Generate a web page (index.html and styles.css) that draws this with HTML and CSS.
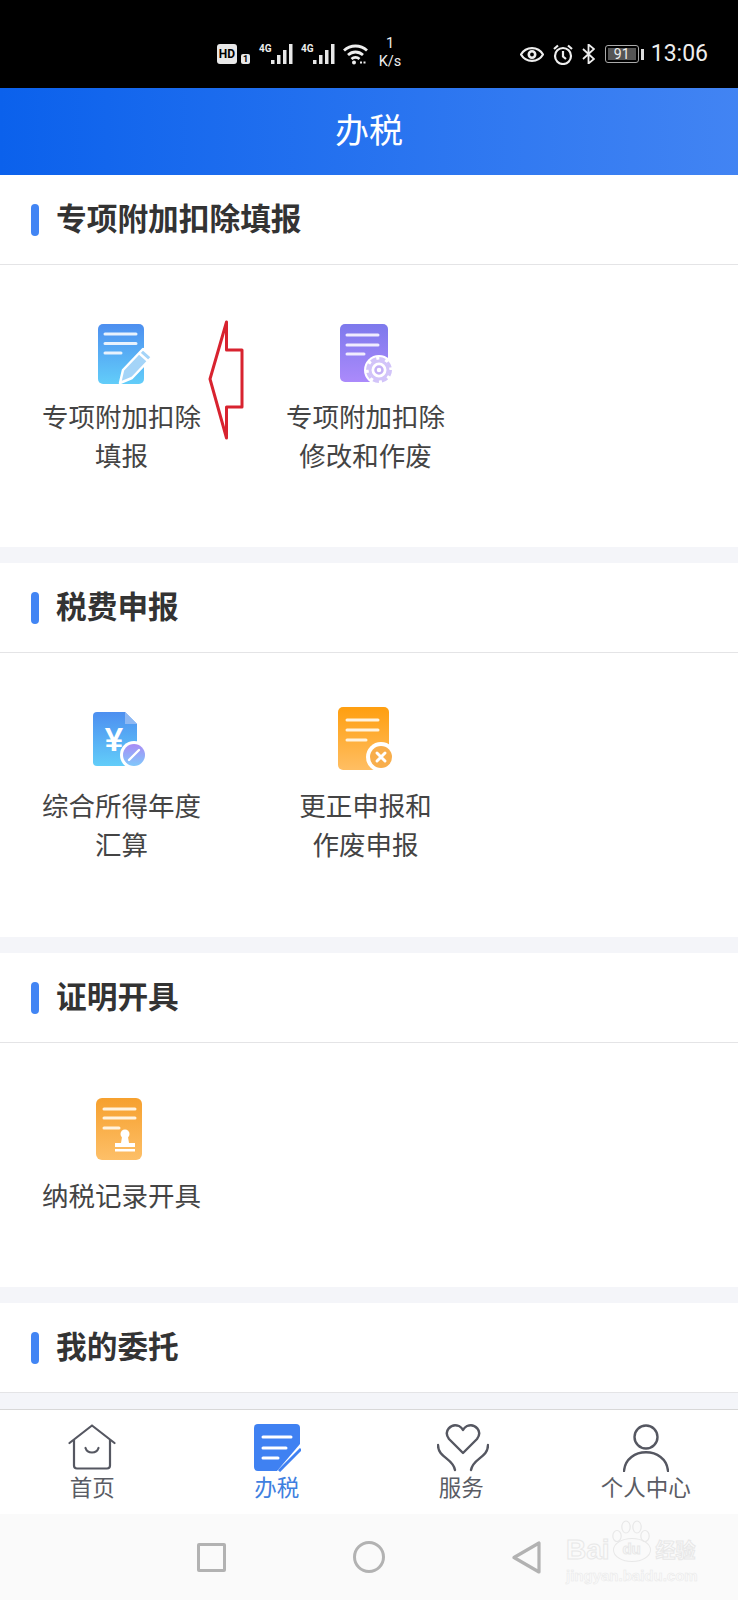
FILE: index.html
```html
<!DOCTYPE html>
<html>
  <head>
    <meta charset="UTF-8">
    <title>办税</title>
    <link rel="stylesheet" href="styles.css">
  </head>
  <body>
    <svg class="defs" width="0" height="0">
      <defs>
        <linearGradient id="g-blue" x1="0" y1="0" x2="0" y2="1"><stop offset="0" stop-color="#4d8ff0"/><stop offset="1" stop-color="#62cdf9"/></linearGradient>
        <linearGradient id="g-purple" x1="0" y1="0" x2="0" y2="1"><stop offset="0" stop-color="#7d79ec"/><stop offset="1" stop-color="#ab8afb"/></linearGradient>
        <linearGradient id="g-orange" x1="0" y1="0" x2="0" y2="1"><stop offset="0" stop-color="#ff9f0f"/><stop offset="1" stop-color="#ffbe63"/></linearGradient>
        <linearGradient id="g-amber" x1="0" y1="0" x2="0" y2="1"><stop offset="0" stop-color="#f6a02e"/><stop offset="1" stop-color="#fdbf68"/></linearGradient>
        <linearGradient id="g-badge" x1="0" y1="0" x2="0" y2="1"><stop offset="0" stop-color="#a98bf5"/><stop offset="1" stop-color="#80c8fb"/></linearGradient>
      </defs>
    </svg>

    <div class="page">
      <div class="status-bar">
        <div class="status-group">
          <span class="hd">HD</span>
          <span class="sim">1</span>
          <span class="net"><span class="net-label">4G</span>
            <svg width="22" height="20" viewBox="0 0 22 20" fill="#e8e8e8"><rect x="0" y="16" width="3.500" height="4"/><rect x="6" y="11" width="3.500" height="9"/><rect x="12" y="6" width="3.500" height="14"/><rect x="18" y="0" width="3.500" height="20"/></svg>
          </span>
          <span class="net"><span class="net-label">4G</span>
            <svg width="22" height="20" viewBox="0 0 22 20" fill="#e8e8e8"><rect x="0" y="16" width="3.500" height="4"/><rect x="6" y="11" width="3.500" height="9"/><rect x="12" y="6" width="3.500" height="14"/><rect x="18" y="0" width="3.500" height="20"/></svg>
          </span>
          <svg class="wifi" width="25" height="21" viewBox="0 0 25 21" fill="none" stroke="#eee" stroke-width="2.800"><path d="M1 6.500C7.500 .5 17.500 .5 24 6.500"/><path d="M5 11C9.500 7 15.500 7 20 11"/><path d="M8.500 15C10.800 13 14.200 13 16.500 15"/><circle cx="11" cy="18.500" r="2" fill="#eee" stroke="none"/><path d="M17 18.500h7" stroke-width="2" stroke-dasharray="2 1.500"/></svg>
          <span class="speed"><span>1</span><span>K/s</span></span>
        </div>
        <div class="status-group">
          <svg class="eye" width="24" height="15" viewBox="0 0 24 15" fill="none" stroke="#eee" stroke-width="2.200"><path d="M1 7.500C6 -1 18 -1 23 7.500C18 16 6 16 1 7.500Z"/><circle cx="12" cy="7.500" r="3.200" stroke-width="2.600"/></svg>
          <svg class="alarm" width="22" height="21" viewBox="0 0 22 21" fill="none" stroke="#eee" stroke-width="2.200"><circle cx="11" cy="12" r="8"/><path d="M11 7v5.500l3 2.500M2 5l4-3.500M20 5l-4-3.500"/></svg>
          <svg class="bt" width="13" height="20" viewBox="0 0 13 20" fill="none" stroke="#eee" stroke-width="1.800"><path d="M1 5l11 10-5.500 4.500V.5L12 5 1 15"/></svg>
          <span class="battery"><span class="battery-level">91</span></span>
          <span class="battery-cap"></span>
          <span class="clock">13:06</span>
        </div>
      </div>

      <div class="app-header">办税</div>

      <section class="section">
        <h2 class="section-title"><span class="title-mark"></span><span class="title-text">专项附加扣除填报</span></h2>
        <div class="items items-first">
          <div class="item">
            <div class="item-icon">
              <svg class="shift-pen" width="58" height="62" viewBox="0 0 58 62">
                <rect x="1" y="1" width="46" height="60" rx="5" fill="url(#g-blue)"/>
                <path d="M8 11h31M8 20.500h31M8 30h16" stroke="#e8f2fd" stroke-width="3" stroke-linecap="round"/>
                <path d="M23 60l3-13 20-21 9 8-20 21z" fill="#a4d4f8" stroke="#fff" stroke-width="2.500" stroke-linejoin="round"/>
                <path d="M42 30l9 8" stroke="#fff" stroke-width="2.500"/>
              </svg>
            </div>
            <div class="item-label">专项附加扣除<br>填报</div>
          </div>
          <div class="item">
            <div class="item-icon">
              <svg width="58" height="62" viewBox="0 0 58 62">
                <rect x="3" y="1" width="48" height="58" rx="5" fill="url(#g-purple)"/>
                <path d="M10 12h31M10 22h31M10 31h17" stroke="#f0ecfe" stroke-width="3" stroke-linecap="round"/>
                <circle cx="42" cy="47" r="15" fill="#fff"/>
                <circle cx="42" cy="47" r="11.500" fill="none" stroke="#d2c4f9" stroke-width="3" stroke-dasharray="6 3.030"/>
                <circle cx="42" cy="47" r="9" fill="none" stroke="#d2c4f9" stroke-width="3"/>
                <circle cx="42" cy="47" r="3.500" fill="none" stroke="#c4b0f6" stroke-width="2.500"/>
              </svg>
            </div>
            <div class="item-label">专项附加扣除<br>修改和作废</div>
          </div>
        </div>
      </section>

      <section class="section">
        <h2 class="section-title"><span class="title-mark"></span><span class="title-text">税费申报</span></h2>
        <div class="items items-tax">
          <div class="item">
            <div class="item-icon">
              <svg class="shift-left" width="58" height="60" viewBox="0 0 58 60">
                <path d="M6 3h28l12 12v38a4 4 0 0 1-4 4H6a4 4 0 0 1-4-4V7a4 4 0 0 1 4-4z" fill="url(#g-blue)"/>
                <path d="M34 3l12 12H34z" fill="#8eb8f3"/>
                <text class="yen" x="23" y="42" text-anchor="middle">¥</text>
                <circle cx="43" cy="46" r="14" fill="#fff"/>
                <circle cx="43" cy="46" r="11" fill="url(#g-badge)"/>
                <path d="M38 51l10-10" stroke="#fff" stroke-width="2.400" stroke-linecap="round"/>
              </svg>
            </div>
            <div class="item-label">综合所得年度<br>汇算</div>
          </div>
          <div class="item">
            <div class="item-icon">
              <svg width="60" height="66" viewBox="0 0 60 66">
                <rect x="2" y="1" width="51" height="63" rx="5" fill="url(#g-orange)"/>
                <path d="M11 14h31M11 24h31M11 34h19" stroke="#fff3df" stroke-width="3" stroke-linecap="round"/>
                <circle cx="45" cy="51" r="15" fill="#fff"/>
                <circle cx="45" cy="51" r="11" fill="#f8ae4c"/>
                <path d="M41 47l8 8M49 47l-8 8" stroke="#fff" stroke-width="3" stroke-linecap="round"/>
              </svg>
            </div>
            <div class="item-label">更正申报和<br>作废申报</div>
          </div>
        </div>
      </section>

      <section class="section">
        <h2 class="section-title"><span class="title-mark"></span><span class="title-text">证明开具</span></h2>
        <div class="items">
          <div class="item">
            <div class="item-icon">
              <svg class="shift-stamp" width="46" height="64" viewBox="0 0 46 64">
                <rect x="0" y="1" width="46" height="62" rx="6" fill="url(#g-amber)"/>
                <path d="M8 12h31M8 21h31M8 31h15" stroke="#fff3df" stroke-width="3" stroke-linecap="round"/>
                <circle cx="29" cy="37" r="4.500" fill="#fff"/>
                <path d="M26 40h6l1 6h6v4H19v-4h6z" fill="#fff"/>
                <rect x="19" y="52" width="20" height="2.500" fill="#fff"/>
              </svg>
            </div>
            <div class="item-label">纳税记录开具</div>
          </div>
        </div>
      </section>

      <section class="section">
        <h2 class="section-title"><span class="title-mark"></span><span class="title-text">我的委托</span></h2>
      </section>

      <nav class="tab-bar">
        <div class="tab">
          <svg width="48" height="48" viewBox="0 0 48 48" fill="none" stroke="#555761" stroke-width="2.200" stroke-linecap="round" stroke-linejoin="round"><path d="M1.500 19L24 1.500 46.500 19"/><path d="M6 16v25.500a3 3 0 0 0 3 3h30a3 3 0 0 0 3-3V16"/><path d="M17.500 24c2 6 11 6 13 0"/></svg>
          <span>首页</span>
        </div>
        <div class="tab tab-active">
          <svg width="48" height="48" viewBox="0 0 48 48"><path d="M5 0h38a4 4 0 0 1 4 4v16L24 47H5a4 4 0 0 1-4-4V4a4 4 0 0 1 4-4z" fill="#3f81f2"/><path d="M10 13h28M10 24h23M10 34h15" stroke="#fff" stroke-width="3" stroke-linecap="round"/><path d="M26 47L48 25" stroke="#3f81f2" stroke-width="3"/></svg>
          <span>办税</span>
        </div>
        <div class="tab">
          <svg class="shift-heart" width="52" height="48" viewBox="0 0 52 48" fill="none" stroke="#555761" stroke-width="2.400" stroke-linecap="round" stroke-linejoin="round"><path d="M26 29L12 15C6 7 14-1 22 2c2 1 3 2 4 4 1-2 2-3 4-4 8-3 16 5 10 13z"/><path d="M1 21c0 13 15 13 17 25"/><path d="M51 21c0 13-15 13-17 25"/></svg>
          <span>服务</span>
        </div>
        <div class="tab">
          <svg width="46" height="48" viewBox="0 0 46 48" fill="none" stroke="#555761" stroke-width="2.400" stroke-linecap="round"><circle cx="23" cy="13" r="11.500"/><path d="M1 47C3 22 43 22 45 47"/></svg>
          <span>个人中心</span>
        </div>
      </nav>

      <div class="nav-bar">
        <span class="nav-square"></span>
        <span class="nav-circle"></span>
        <svg class="nav-back" width="29" height="33" viewBox="0 0 29 33" fill="none" stroke="#b2b2b2" stroke-width="3.200" stroke-linejoin="round"><path d="M2 16.500L27 2v29z"/></svg>
      </div>
    </div>

    <svg class="mark-arrow" width="40" height="122" viewBox="0 0 40 122" fill="none" stroke="#d8232f" stroke-width="3" stroke-linejoin="round"><path d="M18.500 2v28H34v57H18.500v31L2 59z"/></svg>

    <div class="watermark">
      <svg class="paw" width="38" height="27" viewBox="0 0 38 27" fill="none" stroke="#e8e8e8" stroke-width="1.200"><ellipse cx="5" cy="16" rx="4.200" ry="5.500"/><ellipse cx="14" cy="7" rx="4.200" ry="6"/><ellipse cx="25" cy="7" rx="4.200" ry="6"/><ellipse cx="33" cy="16" rx="4.200" ry="5.500"/></svg>
      <div class="wm-top"><span>Bai</span><span class="wm-du">du</span><span class="wm-cn">经验</span></div>
      <div class="wm-url">jingyan.baidu.com</div>
    </div>
  </body>
</html>
```
FILE: styles.css
```css
* {
  box-sizing: border-box;
}

html, body {
  margin: 0;
  padding: 0;
}

body {
  position: relative;
  width: 738px;
  height: 1600px;
  overflow: hidden;
  background: #fff;
  font-family: "Noto Sans CJK SC", sans-serif;
}

.defs {
  position: absolute;
}

.page {
  display: flex;
  flex-direction: column;
  height: 1600px;
  background: #f4f5f9;
}

/* status bar */
.status-bar {
  display: flex;
  justify-content: space-between;
  align-items: center;
  height: 88px;
  padding: 20px 30px 0 217px;
  background: #000;
  color: #eee;
  font-family: Roboto, sans-serif;
}

.status-group {
  display: flex;
  align-items: center;
}

.hd {
  width: 20px;
  height: 20px;
  border-radius: 3px;
  background: #e8e8e8;
  color: #000;
  font-size: 12px;
  font-weight: 700;
  line-height: 20px;
  text-align: center;
}

.sim {
  width: 9px;
  height: 10px;
  margin: 9px 9px 0 4px;
  border-radius: 2px;
  background: #e8e8e8;
  color: #000;
  font-size: 9px;
  font-weight: 700;
  line-height: 10px;
  text-align: center;
}

.net {
  display: flex;
  align-items: flex-start;
  margin-right: 8px;
}

.net-label {
  width: 12px;
  font-size: 10px;
  font-weight: 700;
  line-height: 10px;
}

.speed {
  display: flex;
  flex-direction: column;
  align-items: center;
  width: 26px;
  margin-top: -3px;
  margin-left: 9px;
  font-size: 14.500px;
  line-height: 18px;
}

.alarm {
  margin-left: 8px;
}

.bt {
  margin-left: 8px;
}

.eye {
  margin-left: 2px;
}

.battery {
  display: flex;
  width: 34px;
  height: 18px;
  margin-left: 10px;
  padding: 2px;
  border: 1px solid #aaa;
  border-radius: 3px;
}

.battery-level {
  width: 28px;
  background: #555;
  color: #eee;
  font-size: 14px;
  line-height: 12px;
  text-align: center;
}

.battery-cap {
  width: 3px;
  height: 11px;
  margin: 0 7px 0 2px;
  background: #ddd;
}

.clock {
  font-size: 23px;
  line-height: 28px;
}

/* header */
.app-header {
  height: 87px;
  background: linear-gradient(90deg, #0b61ec, #4284f3);
  color: #fff;
  font-size: 34px;
  line-height: 81px;
  text-align: center;
}

/* sections */
.section {
  margin-bottom: 16px;
  background: #fff;
}

.section-title {
  display: flex;
  align-items: center;
  height: 90px;
  margin: 0;
  padding-left: 31px;
  border-bottom: 1px solid #e4e4e6;
  color: #333;
  font-size: 30.700px;
  font-weight: 700;
}

.title-text {
  margin-top: -6px;
}

.title-mark {
  width: 8px;
  height: 32px;
  margin-right: 17px;
  border-radius: 4px;
  background: #4285f4;
}

.items {
  display: grid;
  grid-template-columns: repeat(3, 244px);
  padding: 52px 0 73px;
}

.items-tax {
  padding-bottom: 74px;
}

.item {
  display: flex;
  flex-direction: column;
  align-items: center;
  padding-right: 1px;
}

.item-icon {
  display: flex;
  align-items: center;
  justify-content: center;
  height: 68px;
  margin-bottom: 12px;
}

.items-first .item-icon {
  height: 74px;
  margin-bottom: 5px;
}

.item-label {
  color: #444;
  font-size: 26.500px;
  line-height: 39px;
  text-align: center;
}

.shift-pen {
  margin-left: 8px;
}

.shift-left {
  margin-right: 4px;
}

.shift-stamp {
  margin-right: 6px;
}

.yen {
  fill: #fff;
  font-family: "Liberation Sans", sans-serif;
  font-size: 33px;
  font-weight: 700;
}

/* tabs */
.tab-bar {
  display: grid;
  grid-template-columns: repeat(4, 1fr);
  height: 105px;
  margin-top: auto;
  padding-top: 14px;
  border-top: 1px solid #d8d8d8;
  background: #fff;
}

.tab {
  display: flex;
  flex-direction: column;
  align-items: center;
  color: #5a5c64;
  font-size: 22.500px;
  line-height: 30px;
}

.tab span {
  margin-top: -1px;
}

.tab-active {
  color: #3f80e0;
}

.shift-heart {
  margin-left: 4px;
}

/* android nav */
.nav-bar {
  display: flex;
  align-items: center;
  height: 86px;
  padding: 0 0 0 197px;
  background: #fafafa;
}

.nav-square {
  width: 29px;
  height: 29px;
  border: 3px solid #b2b2b2;
  border-radius: 2px;
}

.nav-circle {
  width: 32px;
  height: 32px;
  margin-left: 127px;
  border: 3px solid #b2b2b2;
  border-radius: 50%;
}

.nav-back {
  margin-left: 127px;
}

/* hand drawn arrow over the page */
.mark-arrow {
  position: absolute;
  left: 208px;
  top: 320px;
}

/* photo site watermark */
.watermark {
  position: absolute;
  left: 566px;
  top: 1520px;
  width: 134px;
  color: #fafafa;
  -webkit-text-stroke: 1px #e8e8e8;
}

.paw {
  position: absolute;
  left: 46px;
  top: 0;
}

.wm-top {
  display: flex;
  align-items: center;
  height: 24px;
  margin-top: 18px;
  font-family: "Liberation Sans", sans-serif;
  font-size: 28px;
  font-weight: 700;
  line-height: 24px;
}

.wm-du {
  width: 38px;
  height: 24px;
  margin: 0 5px 0 3px;
  border: 1px solid #e8e8e8;
  border-radius: 50%;
  font-size: 15px;
  line-height: 20px;
  text-align: center;
}

.wm-cn {
  font-family: "Noto Sans CJK SC", sans-serif;
  font-size: 20px;
}

.wm-url {
  margin-top: 6px;
  font-family: "Liberation Sans", sans-serif;
  font-size: 15px;
  font-weight: 700;
  line-height: 15px;
  -webkit-text-stroke: .5px #e8e8e8;
}
```
